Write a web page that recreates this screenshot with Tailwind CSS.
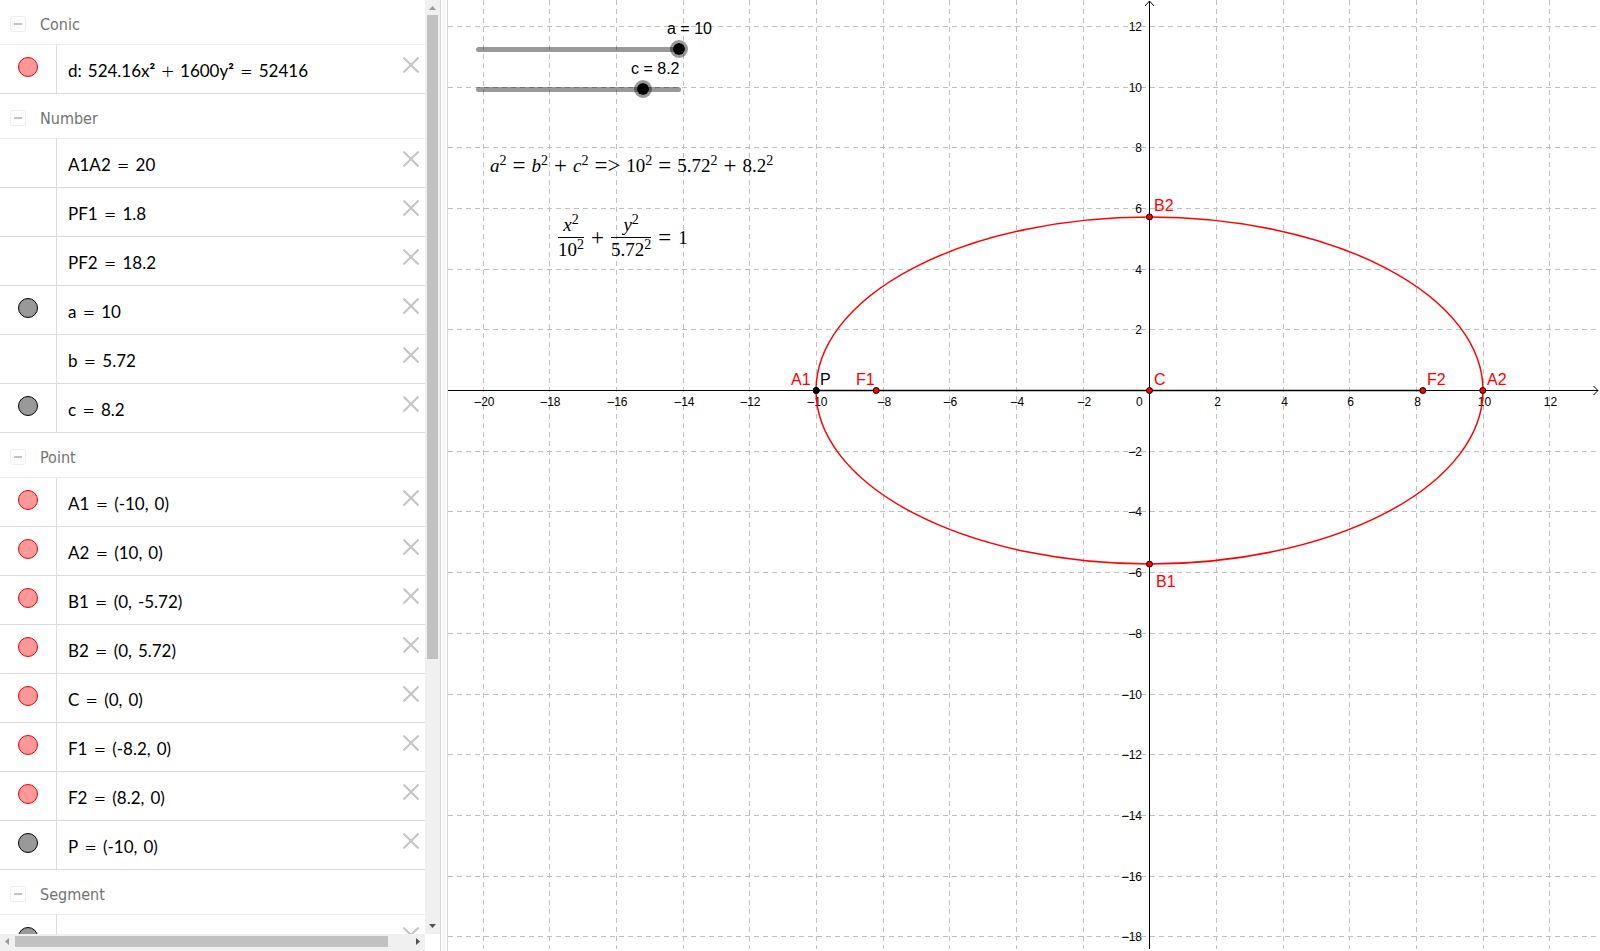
<!DOCTYPE html>
<html lang="en">
<head>
    <meta charset="UTF-8">
    <meta name="viewport" content="width=device-width, initial-scale=1.0">
    <title>Ellipse</title>
    <script src="https://cdn.jsdelivr.net/npm/@tailwindcss/browser@4"></script>
</head>
<body class="h-screen flex overflow-hidden bg-white font-['Liberation_Sans',Arial,sans-serif]">
    <!-- Algebra view -->
    <aside class="w-[440px] shrink-0 h-full grid grid-cols-[1fr_15px] grid-rows-[1fr_17px]">
        <div id="algebra" class="min-h-0 overflow-hidden"></div>

        <div class="min-h-0 bg-[#f0f0f0] flex flex-col items-center">
            <svg class="w-[15px] h-[15px] shrink-0" viewBox="0 0 15 15"><path d="M4 10h7L7.500 6z" fill="#999"/></svg>
            <div class="w-[11px] h-[69%] bg-[#c1c1c1]"></div>
            <svg class="w-[15px] h-[15px] shrink-0 mt-auto" viewBox="0 0 15 15"><path d="M4 5h7L7.500 9z" fill="#505050"/></svg>
        </div>

        <div class="bg-[#f0f0f0] flex items-start">
            <svg class="w-[15px] h-[15px] shrink-0" viewBox="0 0 15 15"><path d="M9 4v7L5 7.500z" fill="#999"/></svg>
            <div class="flex-1 py-[2px]"><div class="w-[94.5%] h-[11px] bg-[#c1c1c1]"></div></div>
            <svg class="w-[15px] h-[15px] shrink-0" viewBox="0 0 15 15"><path d="M6 4v7l4-3.500z" fill="#505050"/></svg>
        </div>
        <div></div>
    </aside>

    <div class="w-2 shrink-0 border-x border-[#d8d8d8] bg-[#f9f9f9]"></div>

    <!-- Graphics view -->
    <main class="relative flex-1 min-w-0 h-full overflow-hidden">
        <svg id="plot" class="absolute inset-0 w-full h-full" xmlns="http://www.w3.org/2000/svg">
            <g id="grid" stroke="#c0c0c0" stroke-dasharray="5 4" shape-rendering="crispEdges"></g>
            <g stroke="#000" fill="none">
                <path d="M0 390.500H1150M1145.500 386l4.500 4.500-4.500 4.500"/>
                <path d="M701.500 949V1M697 6l4.500-5 4.500 5"/>
                <path d="M368 390.500H975" stroke-width="1.400"/>
            </g>
            <g id="ticks" font-size="12" fill="#000"></g>
            <ellipse cx="701.500" cy="390.500" rx="333.500" ry="173.500" fill="none" stroke="#f00" stroke-width="1.500"/>
            <g id="points" font-size="16"></g>
        </svg>

        <!-- Sliders -->
        <label for="sliderA" class="absolute left-[219px] top-[19px] text-base leading-5">a = 10</label>
        <div class="absolute left-[28px] top-[47px] w-[205px] h-[5px] rounded-full bg-black/40"></div>
        <input id="sliderA" type="range" min="0" max="10" step="0.1" value="10" class="absolute left-[22px] top-[40px] w-[218px] h-[18px] appearance-none bg-transparent [&::-webkit-slider-thumb]:appearance-none [&::-webkit-slider-thumb]:size-[18px] [&::-webkit-slider-thumb]:rounded-full [&::-webkit-slider-thumb]:border-3 [&::-webkit-slider-thumb]:border-black/40 [&::-webkit-slider-thumb]:bg-black [&::-webkit-slider-thumb]:bg-clip-padding">
        <label for="sliderC" class="absolute left-[183px] top-[59px] text-base leading-5">c = 8.2</label>
        <div class="absolute left-[28px] top-[87px] w-[205px] h-[5px] rounded-full bg-black/40"></div>
        <input id="sliderC" type="range" min="0" max="10" step="0.1" value="8.2" class="absolute left-[22px] top-[80px] w-[218px] h-[18px] appearance-none bg-transparent [&::-webkit-slider-thumb]:appearance-none [&::-webkit-slider-thumb]:size-[18px] [&::-webkit-slider-thumb]:rounded-full [&::-webkit-slider-thumb]:border-3 [&::-webkit-slider-thumb]:border-black/40 [&::-webkit-slider-thumb]:bg-black [&::-webkit-slider-thumb]:bg-clip-padding">

        <!-- Formulas -->
        <div class="absolute left-[42px] top-[154px] flex items-center gap-[6px] whitespace-nowrap font-['Liberation_Serif',serif] text-[19px] leading-6 [&_sup]:text-[14px] [&_sup]:-top-[7px] [&_b]:font-normal [&_b]:text-[23px]">
            <span><i>a</i><sup>2</sup></span><b>=</b><span><i>b</i><sup>2</sup></span><b>+</b><span><i>c</i><sup>2</sup></span><b>=&gt;</b><span>10<sup>2</sup></span><b>=</b><span>5.72<sup>2</sup></span><b>+</b><span>8.2<sup>2</sup></span>
        </div>
        <div class="absolute left-[110px] top-[213px] flex items-center gap-[7px] whitespace-nowrap font-['Liberation_Serif',serif] text-[19px] leading-6 [&_sup]:text-[14px] [&_sup]:-top-[7px] [&_b]:font-normal [&_b]:text-[23px]">
            <span class="flex flex-col items-center"><span><i>x</i><sup>2</sup></span><span class="border-t border-black">10<sup>2</sup></span></span>
            <b>+</b>
            <span class="flex flex-col items-center"><span><i>y</i><sup>2</sup></span><span class="border-t border-black">5.72<sup>2</sup></span></span>
            <b>=</b>
            <span>1</span>
        </div>
    </main>

    <script>
        const RED = 'border-[#e60000] bg-[#ff9999]';
        const GREY = 'border-black bg-[#999]';
        const groups = [
            ['Conic', 'd: 524.16x² + 1600y² = 52416', RED],
            ['Number', 'A1A2 = 20', '', 'PF1 = 1.8', '', 'PF2 = 18.2', '', 'a = 10', GREY, 'b = 5.72', '', 'c = 8.2', GREY],
            ['Point', 'A1 = (-10, 0)', RED, 'A2 = (10, 0)', RED, 'B1 = (0, -5.72)', RED, 'B2 = (0, 5.72)', RED,
                'C = (0, 0)', RED, 'F1 = (-8.2, 0)', RED, 'F2 = (8.2, 0)', RED, 'P = (-10, 0)', GREY],
            ['Segment', '', GREY]
        ];
        const operator = /^[=+]$/;

        let html = '';
        for (const [title, ...rows] of groups) {
            html += `<div class="h-[45px] border-b border-[#eee] flex items-center pt-1 pl-[10px] gap-[14px]">
                <button aria-label="Collapse ${title}" class="size-4 rounded-[3px] border border-[#eee] flex items-center justify-center"><span class="w-2 h-[2px] bg-[#c4c4c4]"></span></button>
                <h2 class="pt-[2px] font-['DejaVu_Sans_Condensed','DejaVu_Sans',sans-serif] text-base leading-5 text-[#737373]">${title}</h2>
            </div>`;
            for (let i = 0; i < rows.length; i += 2) {
                const ball = rows[i + 1];
                const parts = rows[i].split(' ').map(p => operator.test(p)
                    ? `<span class="text-[22px] font-light">${p}</span>`
                    : `<span>${p.replace('²', '<b>²</b>')}</span>`).join('');
                html += `<div class="h-[49px] border-b border-[#dcdcdc] flex">
                    <div class="w-[57px] border-r border-[#dcdcdc] flex justify-center pt-3">
                        ${ball ? `<button aria-label="Show or hide" class="size-5 rounded-full border ${ball}"></button>` : ''}
                    </div>
                    <div class="flex-1 flex gap-[6px] pl-[11px] pt-[14px] font-['Lato',sans-serif] text-[17px] leading-6">${parts}</div>
                    <button aria-label="Delete" class="size-4 mt-3 mr-[6px]"><svg viewBox="0 0 16 16" stroke="#c4c4c4" stroke-width="2"><path d="M.5.5l15 15M15.500.5l-15 15"/></svg></button>
                </div>`;
            }
        }
        document.getElementById('algebra').innerHTML = html;

        // origin and pixels per unit
        const ox = 701.5, oy = 390.5, ux = 33.33, uy = 30.35;
        const px = v => Math.round(ox + v * ux - 0.1) + 0.5;
        const py = v => Math.floor(oy - v * uy) + 0.5;
        const label = v => v < 0 ? '–' + -v : v;
        let grid = '', ticks = '';
        for (let v = -20; v <= 12; v += 2) {
            if (v) {
                grid += `<path d="M${px(v)} 0V949"/>`;
                ticks += `<text x="${px(v) + 1}" y="406" text-anchor="middle">${label(v)}</text>`;
            }
        }
        for (let v = -18; v <= 12; v += 2) {
            if (v) {
                grid += `<path d="M0 ${py(v)}H1150"/>`;
                ticks += `<text x="694" y="${py(v) + 4}" text-anchor="end">${label(v)}</text>`;
            }
        }
        ticks += '<text x="688" y="406">0</text>';
        document.getElementById('grid').innerHTML = grid;
        document.getElementById('ticks').innerHTML = ticks;

        // name, x, y, label offset
        const points = [
            ['A1', -10, 0, -25, -6, '#f00'], ['P', -10, 0, 4, -6, '#000'],
            ['F1', -8.2, 0, -20, -6, '#f00'], ['C', 0, 0, 4, -6, '#f00'],
            ['F2', 8.2, 0, 4, -6, '#f00'], ['A2', 10, 0, 4, -6, '#f00'],
            ['B2', 0, 5.72, 4, -6, '#f00'], ['B1', 0, -5.72, 6, 23, '#f00']
        ];
        document.getElementById('points').innerHTML = points.map(([n, x, y, dx, dy, c]) =>
            `<circle cx="${ox + x * ux}" cy="${oy - y * uy}" r="3" fill="${c}" stroke="#000"/>
             <text x="${Math.round(ox + x * ux + dx)}" y="${Math.round(oy - y * uy + dy)}" fill="${c}">${n}</text>`).join('');
    </script>
</body>
</html>
